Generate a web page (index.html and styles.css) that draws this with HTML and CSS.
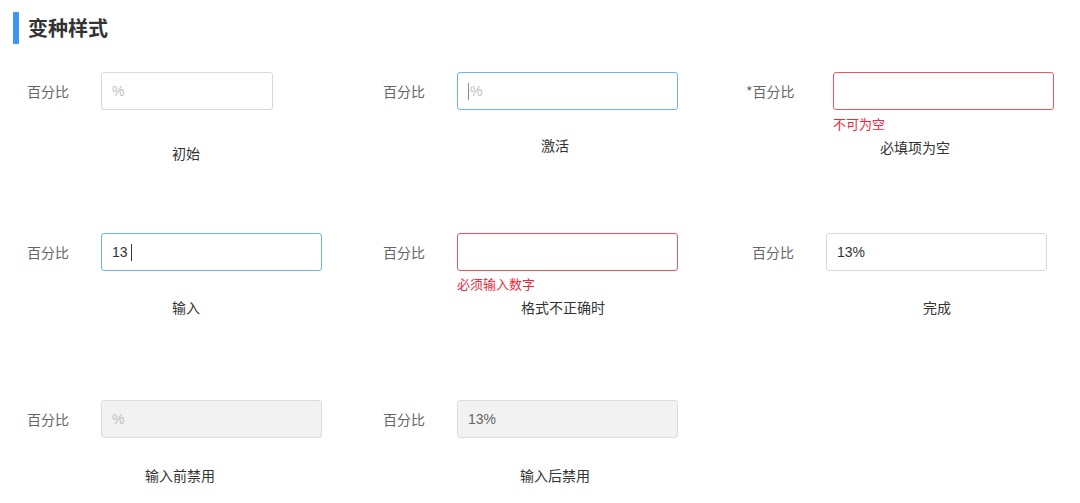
FILE: index.html
```html
<!DOCTYPE html>
<html lang="zh-CN">
<head>
<meta charset="utf-8">
<title>变种样式</title>
<link rel="stylesheet" href="styles.css">
</head>
<body>
<header class="heading">
  <span class="heading-bar"></span>
  <h1 class="heading-text">变种样式</h1>
</header>
<main class="grid">
  <section class="cell row1">
    <div class="field">
      <span class="label">百分比</span>
      <div class="box narrow"><span class="ph">%</span></div>
    </div>
    <div class="caption cap-r1c1">初始</div>
  </section>
  <section class="cell row1">
    <div class="field">
      <span class="label">百分比</span>
      <div class="box focus"><span class="caret"></span><span class="ph">%</span></div>
    </div>
    <div class="caption cap-r1c2">激活</div>
  </section>
  <section class="cell row1 shift-7">
    <div class="field">
      <span class="label label-wide">*百分比</span>
      <div class="box error"></div>
    </div>
    <div class="err err-wide">不可为空</div>
    <div class="caption cap-r1c3">必填项为空</div>
  </section>

  <section class="cell row2">
    <div class="field">
      <span class="label">百分比</span>
      <div class="box focus"><span class="val">13&nbsp;</span><span class="caret dark"></span></div>
    </div>
    <div class="caption cap-r2c1">输入</div>
  </section>
  <section class="cell row2">
    <div class="field">
      <span class="label">百分比</span>
      <div class="box error"></div>
    </div>
    <div class="err">必须输入数字</div>
    <div class="caption cap-r2c2">格式不正确时</div>
  </section>
  <section class="cell row2 shift-13">
    <div class="field">
      <span class="label">百分比</span>
      <div class="box"><span class="val">13%</span></div>
    </div>
    <div class="caption cap-r2c3">完成</div>
  </section>

  <section class="cell row3">
    <div class="field">
      <span class="label">百分比</span>
      <div class="box disabled"><span class="ph">%</span></div>
    </div>
    <div class="caption cap-r3c1">输入前禁用</div>
  </section>
  <section class="cell row3">
    <div class="field">
      <span class="label">百分比</span>
      <div class="box disabled"><span class="val muted">13%</span></div>
    </div>
    <div class="caption cap-r3c2">输入后禁用</div>
  </section>
</main>
</body>
</html>
```
FILE: styles.css
```css
html, body {
  margin: 0;
  padding: 0;
  background: #ffffff;
}
body {
  font-family: "Noto Sans CJK SC", "Noto Sans", "Liberation Sans", sans-serif;
  color: #333333;
  width: 1080px;
  height: 503px;
  overflow: hidden;
}
.heading {
  display: flex;
  align-items: center;
  padding: 12px 0 0 13px;
  gap: 9px;
  height: 32px;
}
.heading-bar {
  width: 6px;
  height: 32px;
  background: #3d95f5;
  border-radius: 1px;
}
.heading-text {
  margin: 0;
  font-size: 20px;
  font-weight: 700;
  color: #333333;
  line-height: 32px;
}
.grid {
  display: grid;
  grid-template-columns: 356px 356px 1fr;
  grid-template-rows: 161px 167px 1fr;
  margin-top: 28px;
  padding-left: 27px;
}
.cell {
  display: flex;
  flex-direction: column;
  align-items: flex-start;
}
.shift-7 { padding-left: 7px; }
.shift-13 { padding-left: 13px; }
.field {
  display: flex;
  align-items: center;
  height: 38px;
}
.label {
  width: 74px;
  font-size: 14px;
  color: #666666;
  line-height: 20px;
  flex: none;
}
.label-wide { width: 87px; }
.box {
  box-sizing: border-box;
  width: 221px;
  height: 38px;
  border: 1px solid #d9d9d9;
  border-radius: 3px;
  background: #ffffff;
  display: flex;
  align-items: center;
  padding-left: 10px;
  font-size: 14px;
  font-family: "Liberation Sans", "Noto Sans CJK SC", sans-serif;
}
.box.narrow { width: 172px; }
.box.focus { border-color: #6ab3ee; }
.box.error { border-color: #ef5460; }
.box.disabled {
  background: #f2f2f2;
  border-color: #dcdcdc;
}
.ph { color: #c0c0c0; }
.val { color: #333333; }
.val.muted { color: #666666; }
.caret {
  display: inline-block;
  width: 1px;
  height: 17px;
  background: #8a8a8a;
  margin-right: 1px;
}
.caret.dark { background: #333333; }
.err {
  margin: 6px 0 0 74px;
  font-size: 13px;
  line-height: 16px;
  color: #f0283c;
}
.err.err-wide { margin-left: 87px; }
.cell.row2 .err { margin-top: 5px; }
.caption {
  font-size: 14px;
  line-height: 20px;
  color: #333333;
}
.cap-r1c1 { margin: 33px 0 0 145px; }
.cap-r1c2 { margin: 25px 0 0 158px; }
.cap-r1c3 { margin: 5px 0 0 134px; }
.cap-r2c1 { margin: 26px 0 0 145px; }
.cap-r2c2 { margin: 5px 0 0 138px; }
.cap-r2c3 { margin: 26px 0 0 171px; }
.cap-r3c1 { margin: 27px 0 0 118px; }
.cap-r3c2 { margin: 27px 0 0 137px; }
```
